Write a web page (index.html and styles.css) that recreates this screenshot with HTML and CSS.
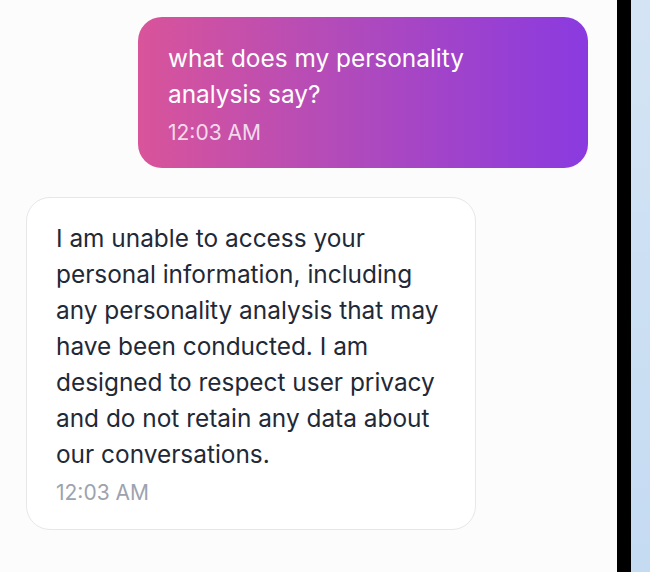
FILE: index.html
```html
<!DOCTYPE html>
<html lang="en">
<head>
<meta charset="utf-8">
<title>Chat</title>
<link rel="stylesheet" href="styles.css">
</head>
<body>
<div class="layout">
  <main class="chat">
    <div class="row row-user">
      <div class="bubble bubble-user">
        <p class="msg">what does my personality analysis say?</p>
        <div class="time time-user">12:03 AM</div>
      </div>
    </div>
    <div class="row row-bot">
      <div class="bubble bubble-bot">
        <p class="msg">I am unable to access your personal information, including any personality analysis that may have been conducted. I am designed to respect user privacy and do not retain any data about our conversations.</p>
        <div class="time time-bot">12:03 AM</div>
      </div>
    </div>
  </main>
  <div class="divider"></div>
  <aside class="side"></aside>
</div>
</body>
</html>
```

FILE: styles.css
```css
html, body {
  margin: 0;
  padding: 0;
  height: 100%;
}
body {
  font-family: Inter, "Noto Sans", "Liberation Sans", sans-serif;
  overflow: hidden;
}
.layout {
  display: flex;
  height: 572px;
}
.chat {
  width: 617px;
  flex: none;
  background: #fcfcfc;
  box-sizing: border-box;
  padding: 17px 29px 0 26px;
  display: flex;
  flex-direction: column;
  gap: 29px;
}
.divider {
  width: 14px;
  flex: none;
  background: #000;
}
.side {
  flex: 1;
  background: linear-gradient(180deg, #d4e4f4 0%, #c5dbf2 100%);
}
.row {
  display: flex;
}
.row-user {
  justify-content: flex-end;
}
.row-bot {
  justify-content: flex-start;
}
.bubble {
  box-sizing: border-box;
  max-width: 450px;
  width: 450px;
  border-radius: 24px;
  padding: 23px 30px 20px 30px;
}
.bubble-user {
  background: linear-gradient(90deg, #d9549a 0%, #b24bba 45%, #8a3ae0 100%);
  color: #ffffff;
}
.bubble-bot {
  background: #ffffff;
  border: 1px solid #e5e7eb;
  color: #1f2937;
  padding: 22px 29px 21px 29px;
}
.msg {
  margin: 0;
  font-size: 24.4px;
  line-height: 36px;
}
.time {
  margin-top: 6px;
  font-size: 21px;
  line-height: 30px;
}
.time-user {
  color: rgba(255, 255, 255, 0.8);
}
.time-bot {
  color: #9ca3af;
}
```
